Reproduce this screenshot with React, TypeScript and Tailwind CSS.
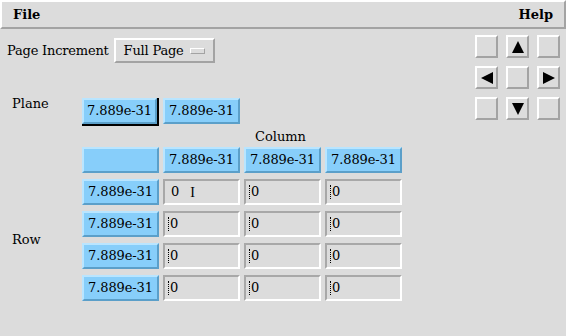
import React from "react";

const font = { fontFamily: '"DejaVu Serif", "Liberation Serif", serif' };

const raised = "border-2 border-t-white border-l-white border-b-[#a3a3a3] border-r-[#a3a3a3]";
const sunken = "border-2 border-t-[#a8a8a8] border-l-[#a8a8a8] border-b-white border-r-white";
const blue = "bg-[#87cefa] border-2 border-t-[#b9e5ff] border-l-[#b9e5ff] border-b-[#5b9fc9] border-r-[#5b9fc9]";

function BlueBtn({ text, active }: { text?: string; active?: boolean }) {
  return (
    <div className={active ? "border-r-2 border-b-2 border-black" : ""}>
      <div className={`${blue} h-[26px] flex items-center justify-center text-[13px] text-black tracking-[-0.1px]`}>
        {text}
      </div>
    </div>
  );
}

function Cell({ pointer }: { pointer?: boolean }) {
  return (
    <div className={`${sunken} h-[26px] flex items-center pl-[3px] text-[13px] text-black`}>
      {!pointer && <span className="inline-block w-0 h-[14px] border-l border-dotted border-black mr-[1px]" />}
      <span className={pointer ? "ml-[3px]" : ""}>0</span>
      {pointer && <span className="ml-[11px] text-[14px] font-light" style={{ fontFamily: '"Liberation Serif", serif' }}>I</span>}
    </div>
  );
}

function Arrow({ dir }: { dir?: "up" | "down" | "left" | "right" }) {
  const paths: Record<string, string> = {
    up: "M8 2 L14 14 L2 14 Z",
    down: "M2 2 L14 2 L8 14 Z",
    left: "M2 8 L14 2 L14 14 Z",
    right: "M2 2 L14 8 L2 14 Z",
  };
  return (
    <div className={`${raised} w-[23px] h-[23px] flex items-center justify-center bg-[#dcdcdc]`}>
      {dir && (
        <svg width="16" height="16" viewBox="0 0 16 16">
          <path d={paths[dir]} fill="#000" />
        </svg>
      )}
    </div>
  );
}

export default function App() {
  const v = "7.889e-31";
  return (
    <div className="w-[566px] h-[336px] bg-[#dcdcdc] text-black overflow-hidden" style={font}>
      {/* Menu bar */}
      <div className={`${raised} h-[29px] flex items-center justify-between px-[11px] text-[13px] font-bold`}>
        <span>File</span>
        <span>Help</span>
      </div>

      <div className="flex">
        {/* Left controls */}
        <div className="flex-1">
          <div className="flex items-center mt-[9px] ml-[7px] gap-[5px] text-[13px]">
            <span className="tracking-[-0.2px]">Page Increment</span>
            <div className={`${raised} h-[25px] w-[101px] flex items-center pl-[8px] gap-[6px]`}>
              <span className="tracking-[-0.2px]">Full Page</span>
              <span className={`${raised} w-[15px] h-[6px] border-[1px]`} />
            </div>
          </div>

          <div className="grid grid-cols-[66px_77px_77px_77px_77px] gap-x-[4px] ml-[12px] mt-[35px] text-[13px]">
            {/* Plane */}
            <div className="-mt-[4px]">Plane</div>
            <BlueBtn text={v} active />
            <BlueBtn text={v} />
            <div />
            <div />

            {/* Column label */}
            <div />
            <div />
            <div className="col-span-3 h-[21px] flex items-start justify-center pt-[1px] pr-[4px]">Column</div>

            {/* Header */}
            <div />
            <BlueBtn />
            <BlueBtn text={v} />
            <BlueBtn text={v} />
            <BlueBtn text={v} />
          </div>

          <div className="grid grid-cols-[66px_77px_77px_77px_77px] grid-rows-[26px_26px_26px_26px] gap-x-[4px] gap-y-[6px] ml-[12px] mt-[6px] text-[13px]">
            <div className="row-span-4 flex items-center">Row</div>
            {[0, 1, 2, 3].map((r) => (
              <React.Fragment key={r}>
                <BlueBtn text={v} />
                <Cell pointer={r === 0} />
                <Cell />
                <Cell />
              </React.Fragment>
            ))}
          </div>
        </div>

        {/* Arrow pad */}
        <div className="grid grid-cols-[23px_23px_23px] gap-x-[8px] gap-y-[8px] mt-[6px] mr-[6px] h-fit">
          <Arrow />
          <Arrow dir="up" />
          <Arrow />
          <Arrow dir="left" />
          <Arrow />
          <Arrow dir="right" />
          <Arrow />
          <Arrow dir="down" />
          <Arrow />
        </div>
      </div>
    </div>
  );
}
